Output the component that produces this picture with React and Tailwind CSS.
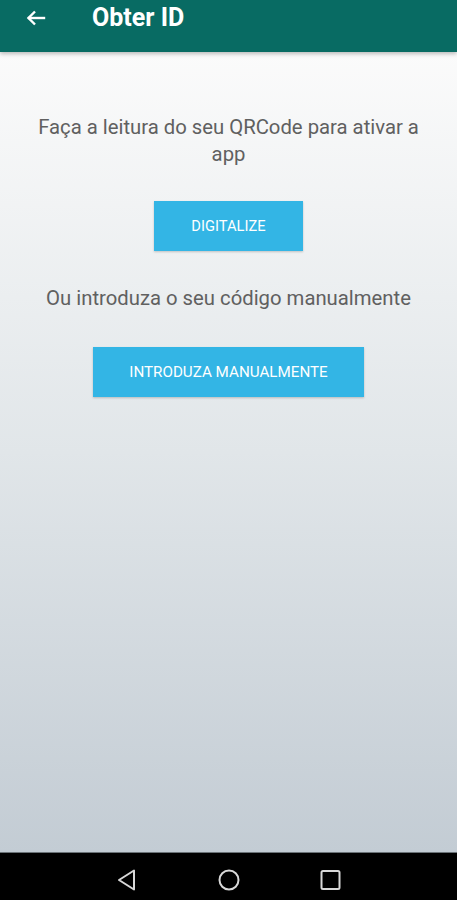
import React from "react";

export default function App() {
  return (
    <div className="w-[457px] h-[900px] flex flex-col overflow-hidden" style={{ fontFamily: "Roboto, 'Noto Sans', sans-serif" }}>
      <div className="h-[52px] bg-[#086b63] flex items-center shrink-0 shadow-[0_2px_4px_rgba(0,0,0,0.25)] z-10">
        <div className="w-[92px] flex items-center pl-[24px] -mt-[17px]">
          <svg width="24" height="24" viewBox="0 0 24 24" fill="none" stroke="#ffffff" strokeWidth="2.4" strokeLinecap="square">
            <path d="M20 12H5" />
            <path d="M11 5.5L4.5 12L11 18.5" strokeLinecap="butt" />
          </svg>
        </div>
        <div className="text-white text-[25px] font-bold leading-none -mt-[17px]">Obter ID</div>
      </div>
      <div className="flex-1 flex flex-col items-center bg-gradient-to-b from-[#fbfbfb] via-[#e1e6e9] to-[#c3ccd4]">
        <p className="mt-[62px] px-[28px] text-center text-[20.3px] leading-[27px] text-[#606060]">
          Faça a leitura do seu QRCode para ativar a app
        </p>
        <button className="mt-[33px] w-[149px] h-[50px] bg-[#33b5e5] text-white text-[14.7px] font-normal shadow-[0_1px_2px_rgba(0,0,0,0.2)]">
          DIGITALIZE
        </button>
        <p className="mt-[34px] text-center text-[20.3px] leading-[27px] text-[#606060]">
          Ou introduza o seu código manualmente
        </p>
        <button className="mt-[35px] w-[271px] h-[50px] bg-[#33b5e5] text-white text-[15.2px] font-normal shadow-[0_1px_2px_rgba(0,0,0,0.2)]">
          INTRODUZA MANUALMENTE
        </button>
      </div>
      <div className="h-[48px] bg-black shrink-0 flex items-center justify-center gap-[76px] pt-[6px] border-t border-[#6b7378]">
        <svg width="26" height="26" viewBox="0 0 26 26" fill="none" stroke="#d8d8d8" strokeWidth="2" strokeLinejoin="round">
          <path d="M20 3.5V22.5L5 13Z" />
        </svg>
        <svg width="26" height="26" viewBox="0 0 26 26" fill="none" stroke="#d8d8d8" strokeWidth="2">
          <circle cx="13" cy="13" r="9.5" />
        </svg>
        <svg width="26" height="26" viewBox="0 0 26 26" fill="none" stroke="#d8d8d8" strokeWidth="2">
          <rect x="3.5" y="4" width="18" height="18" rx="1.5" />
        </svg>
      </div>
    </div>
  );
}
